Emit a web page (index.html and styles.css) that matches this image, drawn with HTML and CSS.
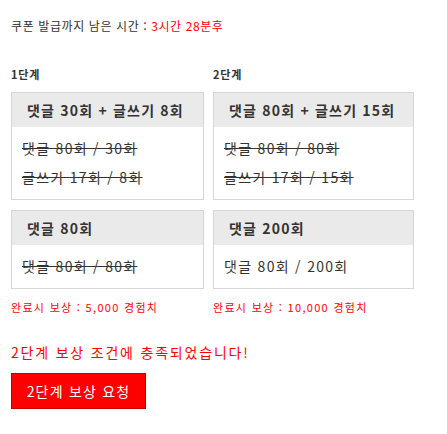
FILE: index.html
```html
<!DOCTYPE html>
<html lang="ko">
<head>
<meta charset="utf-8">
<link rel="stylesheet" href="styles.css">
</head>
<body>
<div class="wrap">
  <p class="timer">쿠폰 발급까지 남은 시간 : <span class="red">3시간 28분후</span></p>
  <div class="stages">
    <div class="stage">
      <div class="label">1단계</div>
      <div class="card">
        <div class="card-head">댓글 30회 + 글쓰기 8회</div>
        <div class="card-body">
          <div class="line done">댓글 80회 / 30회</div>
          <div class="line done">글쓰기 17회 / 8회</div>
        </div>
      </div>
      <div class="card">
        <div class="card-head">댓글 80회</div>
        <div class="card-body">
          <div class="line done">댓글 80회 / 80회</div>
        </div>
      </div>
      <div class="reward">완료시 보상 : 5,000 경험치</div>
    </div>
    <div class="stage">
      <div class="label">2단계</div>
      <div class="card">
        <div class="card-head">댓글 80회 + 글쓰기 15회</div>
        <div class="card-body">
          <div class="line done">댓글 80회 / 80회</div>
          <div class="line done">글쓰기 17회 / 15회</div>
        </div>
      </div>
      <div class="card">
        <div class="card-head">댓글 200회</div>
        <div class="card-body">
          <div class="line">댓글 80회 / 200회</div>
        </div>
      </div>
      <div class="reward">완료시 보상 : 10,000 경험치</div>
    </div>
  </div>
  <p class="notice">2단계 보상 조건에 충족되었습니다!</p>
  <button class="request" type="button">2단계 보상 요청</button>
</div>
</body>
</html>
```
FILE: styles.css
```css
html, body {
  margin: 0;
  padding: 0;
  background: #fff;
}
body {
  font-family: "Noto Sans CJK KR", "Noto Sans", sans-serif;
  color: #333;
}
.wrap {
  padding: 18px 11px 0 11px;
}
.timer {
  margin: 0;
  font-size: 12px;
  line-height: 16px;
  letter-spacing: 0.6px;
  white-space: nowrap;
}
.red {
  color: #f00;
}
.stages {
  display: grid;
  grid-template-columns: 193px 201px;
  column-gap: 9px;
  margin-top: 33px;
}
.label {
  font-size: 11px;
  font-weight: bold;
  line-height: 14px;
  letter-spacing: 0.8px;
  margin-bottom: 11px;
}
.card {
  border: 1px solid #d6d6d6;
  margin-bottom: 10px;
}
.card-head {
  background: #eaeaea;
  height: 34px;
  line-height: 34px;
  padding: 0 15px;
  font-size: 14px;
  font-weight: bold;
  letter-spacing: 1.2px;
  white-space: nowrap;
}
.card-body {
  padding: 7px 10px 7px 10px;
}
.line {
  font-size: 14px;
  line-height: 29px;
  letter-spacing: 1.3px;
  white-space: nowrap;
}
.done {
  text-decoration: line-through;
}
.reward {
  color: #f00;
  font-size: 11px;
  line-height: 14px;
  letter-spacing: 1.3px;
  margin-top: 11px;
  white-space: nowrap;
}
.notice {
  margin: 28px 0 0 0;
  color: #f00;
  font-size: 14px;
  line-height: 20px;
  letter-spacing: 1.8px;
  white-space: nowrap;
}
.request {
  display: block;
  margin-top: 11px;
  width: 135px;
  height: 36px;
  background: #f00;
  border: 1px solid #c40000;
  color: #fff;
  font-family: "Noto Sans CJK KR", "Noto Sans", sans-serif;
  font-size: 14px;
  letter-spacing: 1.2px;
  padding: 0;
}
```
